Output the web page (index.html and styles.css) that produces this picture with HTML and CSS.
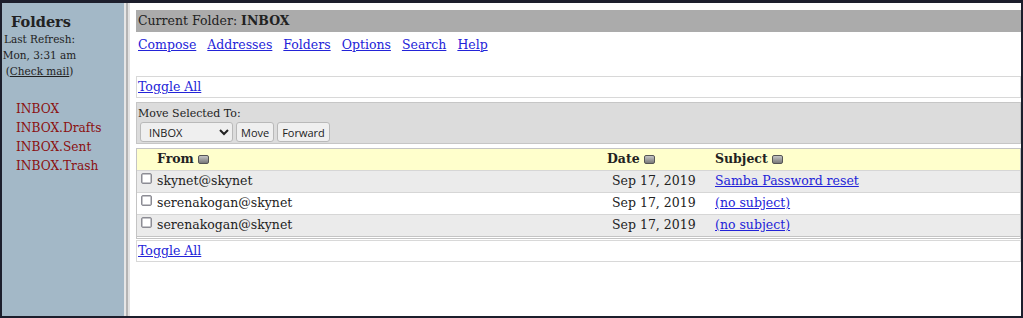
FILE: index.html
```html
<!DOCTYPE html>
<html lang="en">
<head>
    <meta charset="UTF-8">
    <title>SquirrelMail - INBOX</title>
    <link rel="stylesheet" href="styles.css">
</head>
<body>
    <div class="frames">
        <div class="sidebar">
            <div class="side-head">
                <div class="side-title">Folders</div>
                <div class="side-small">Last Refresh:</div>
                <div class="side-small">Mon, 3:31 am</div>
                <div class="side-small">(<a href="#" class="check">Check mail</a>)</div>
            </div>
            <ul class="folders">
                <li><a href="#">INBOX</a></li>
                <li><a href="#">INBOX.Drafts</a></li>
                <li><a href="#">INBOX.Sent</a></li>
                <li><a href="#">INBOX.Trash</a></li>
            </ul>
        </div>
        <div class="divider"></div>
        <div class="main">
            <div class="current">Current Folder: <b>INBOX</b></div>
            <div class="nav">
                <a href="#">Compose</a>
                <a href="#">Addresses</a>
                <a href="#">Folders</a>
                <a href="#">Options</a>
                <a href="#">Search</a>
                <a href="#">Help</a>
            </div>

            <div class="toggle-box"><a href="#">Toggle All</a></div>

            <div class="move-bar">
                <div class="move-label">Move Selected To:</div>
                <div class="move-controls">
                    <select class="target">
                        <option>INBOX</option>
                        <option>INBOX.Drafts</option>
                        <option>INBOX.Sent</option>
                        <option>INBOX.Trash</option>
                    </select>
                    <button>Move</button>
                    <button>Forward</button>
                </div>
            </div>

            <div class="messages">
                <div class="row head">
                    <span></span>
                    <span>From <i class="sort"></i></span>
                    <span>Date <i class="sort"></i></span>
                    <span>Subject <i class="sort"></i></span>
                </div>
                <div class="row odd">
                    <span><i class="box"></i></span>
                    <span>skynet@skynet</span>
                    <span class="date">Sep 17, 2019</span>
                    <span><a href="#">Samba Password reset</a></span>
                </div>
                <div class="row">
                    <span><i class="box"></i></span>
                    <span>serenakogan@skynet</span>
                    <span class="date">Sep 17, 2019</span>
                    <span><a href="#">(no subject)</a></span>
                </div>
                <div class="row odd">
                    <span><i class="box"></i></span>
                    <span>serenakogan@skynet</span>
                    <span class="date">Sep 17, 2019</span>
                    <span><a href="#">(no subject)</a></span>
                </div>
            </div>

            <div class="toggle-box bottom"><a href="#">Toggle All</a></div>
        </div>
    </div>
</body>
</html>
```

FILE: styles.css
```css
html, body {
    margin: 0;
    height: 100%;
}
body {
    background: #1c1e2c;
    padding: 3px 2px 2px 2px;
    box-sizing: border-box;
    font-family: "DejaVu Serif", serif;
    font-size: 12.5px;
    color: #222;
}
a {
    color: #2323d8;
}
.frames {
    display: flex;
    height: 100%;
}
.sidebar {
    width: 122px;
    background: #a3b8c7;
    flex-shrink: 0;
}
.side-head {
    width: 75px;
    text-align: center;
    padding-top: 9px;
    white-space: nowrap;
}
.side-title {
    font-weight: bold;
    font-size: 14.5px;
    line-height: 19px;
    margin-left: 3px;
}
.side-small {
    font-size: 10.5px;
    line-height: 16px;
}
.side-small .check {
    color: #222;
}
.folders {
    list-style: none;
    margin: 21px 0 0 0;
    padding: 0 0 0 14px;
}
.folders li {
    font-size: 12.2px;
    line-height: 19px;
    height: 19px;
}
.folders a {
    color: #8b1010;
    text-decoration: none;
}
.divider {
    width: 6px;
    flex-shrink: 0;
    background: linear-gradient(to right, #e6e6e6 0 2px, #b4b4b4 2px 4px, #e2e2e2 4px 6px);
}
.main {
    flex: 1;
    background: #fff;
    padding: 7px 0 0 6px;
}
.current {
    background: #ababab;
    height: 22px;
    line-height: 22px;
    padding-left: 2px;
}
.nav {
    display: flex;
    gap: 11px;
    padding-left: 2px;
    height: 25px;
    line-height: 25px;
    margin-bottom: 19px;
}
.toggle-box {
    border: 1px solid #d8d8d8;
    height: 20px;
    line-height: 20px;
    padding-left: 1px;
}
.move-bar {
    margin-top: 4px;
    background: #dcdcdc;
    border: 1px solid #c6c6c6;
    height: 40px;
    padding-left: 1px;
}
.move-label {
    font-size: 11px;
    line-height: 14px;
    margin-top: 4px;
}
.move-controls {
    display: flex;
    gap: 3px;
    margin-top: 1px;
    padding-left: 2px;
}
.move-controls select,
.move-controls button {
    font-family: "Open Sans", sans-serif;
    font-size: 11px;
    height: 20px;
    background: #efefef;
    border: 1px solid #b9b9b9;
    border-radius: 3px;
    color: #222;
    padding: 0 4px;
}
.move-controls select {
    width: 93px;
}
.messages {
    margin-top: 4px;
    border: 1px solid #c4c4c4;
    border-bottom: 3px double #c4c4c4;
}
.row {
    display: grid;
    grid-template-columns: 20px 450px 108px 1fr;
    height: 21px;
    line-height: 20px;
    border-top: 1px solid #d6d6d6;
}
.row.head {
    border-top: none;
    background: #ffffcc;
    font-weight: bold;
    height: 21px;
}
.row.head span:nth-child(2) {
    padding-left: 0;
}
.row.odd {
    background: #ebebeb;
}
.row .date {
    padding-left: 5px;
}
.sort {
    display: inline-block;
    width: 9px;
    height: 7px;
    border: 1px solid #555;
    border-radius: 2px;
    background: linear-gradient(#c4c4c4, #7a7a7a);
    vertical-align: -1px;
}
.box {
    display: inline-block;
    width: 9px;
    height: 9px;
    border: 1px solid #8c8c94;
    border-radius: 2px;
    background: #fff;
    margin-left: 4px;
    box-shadow: inset 0 0 0 0.5px #8c8c94;
    vertical-align: 1px;
}
.toggle-box.bottom {
    margin-top: 1px;
}
```
